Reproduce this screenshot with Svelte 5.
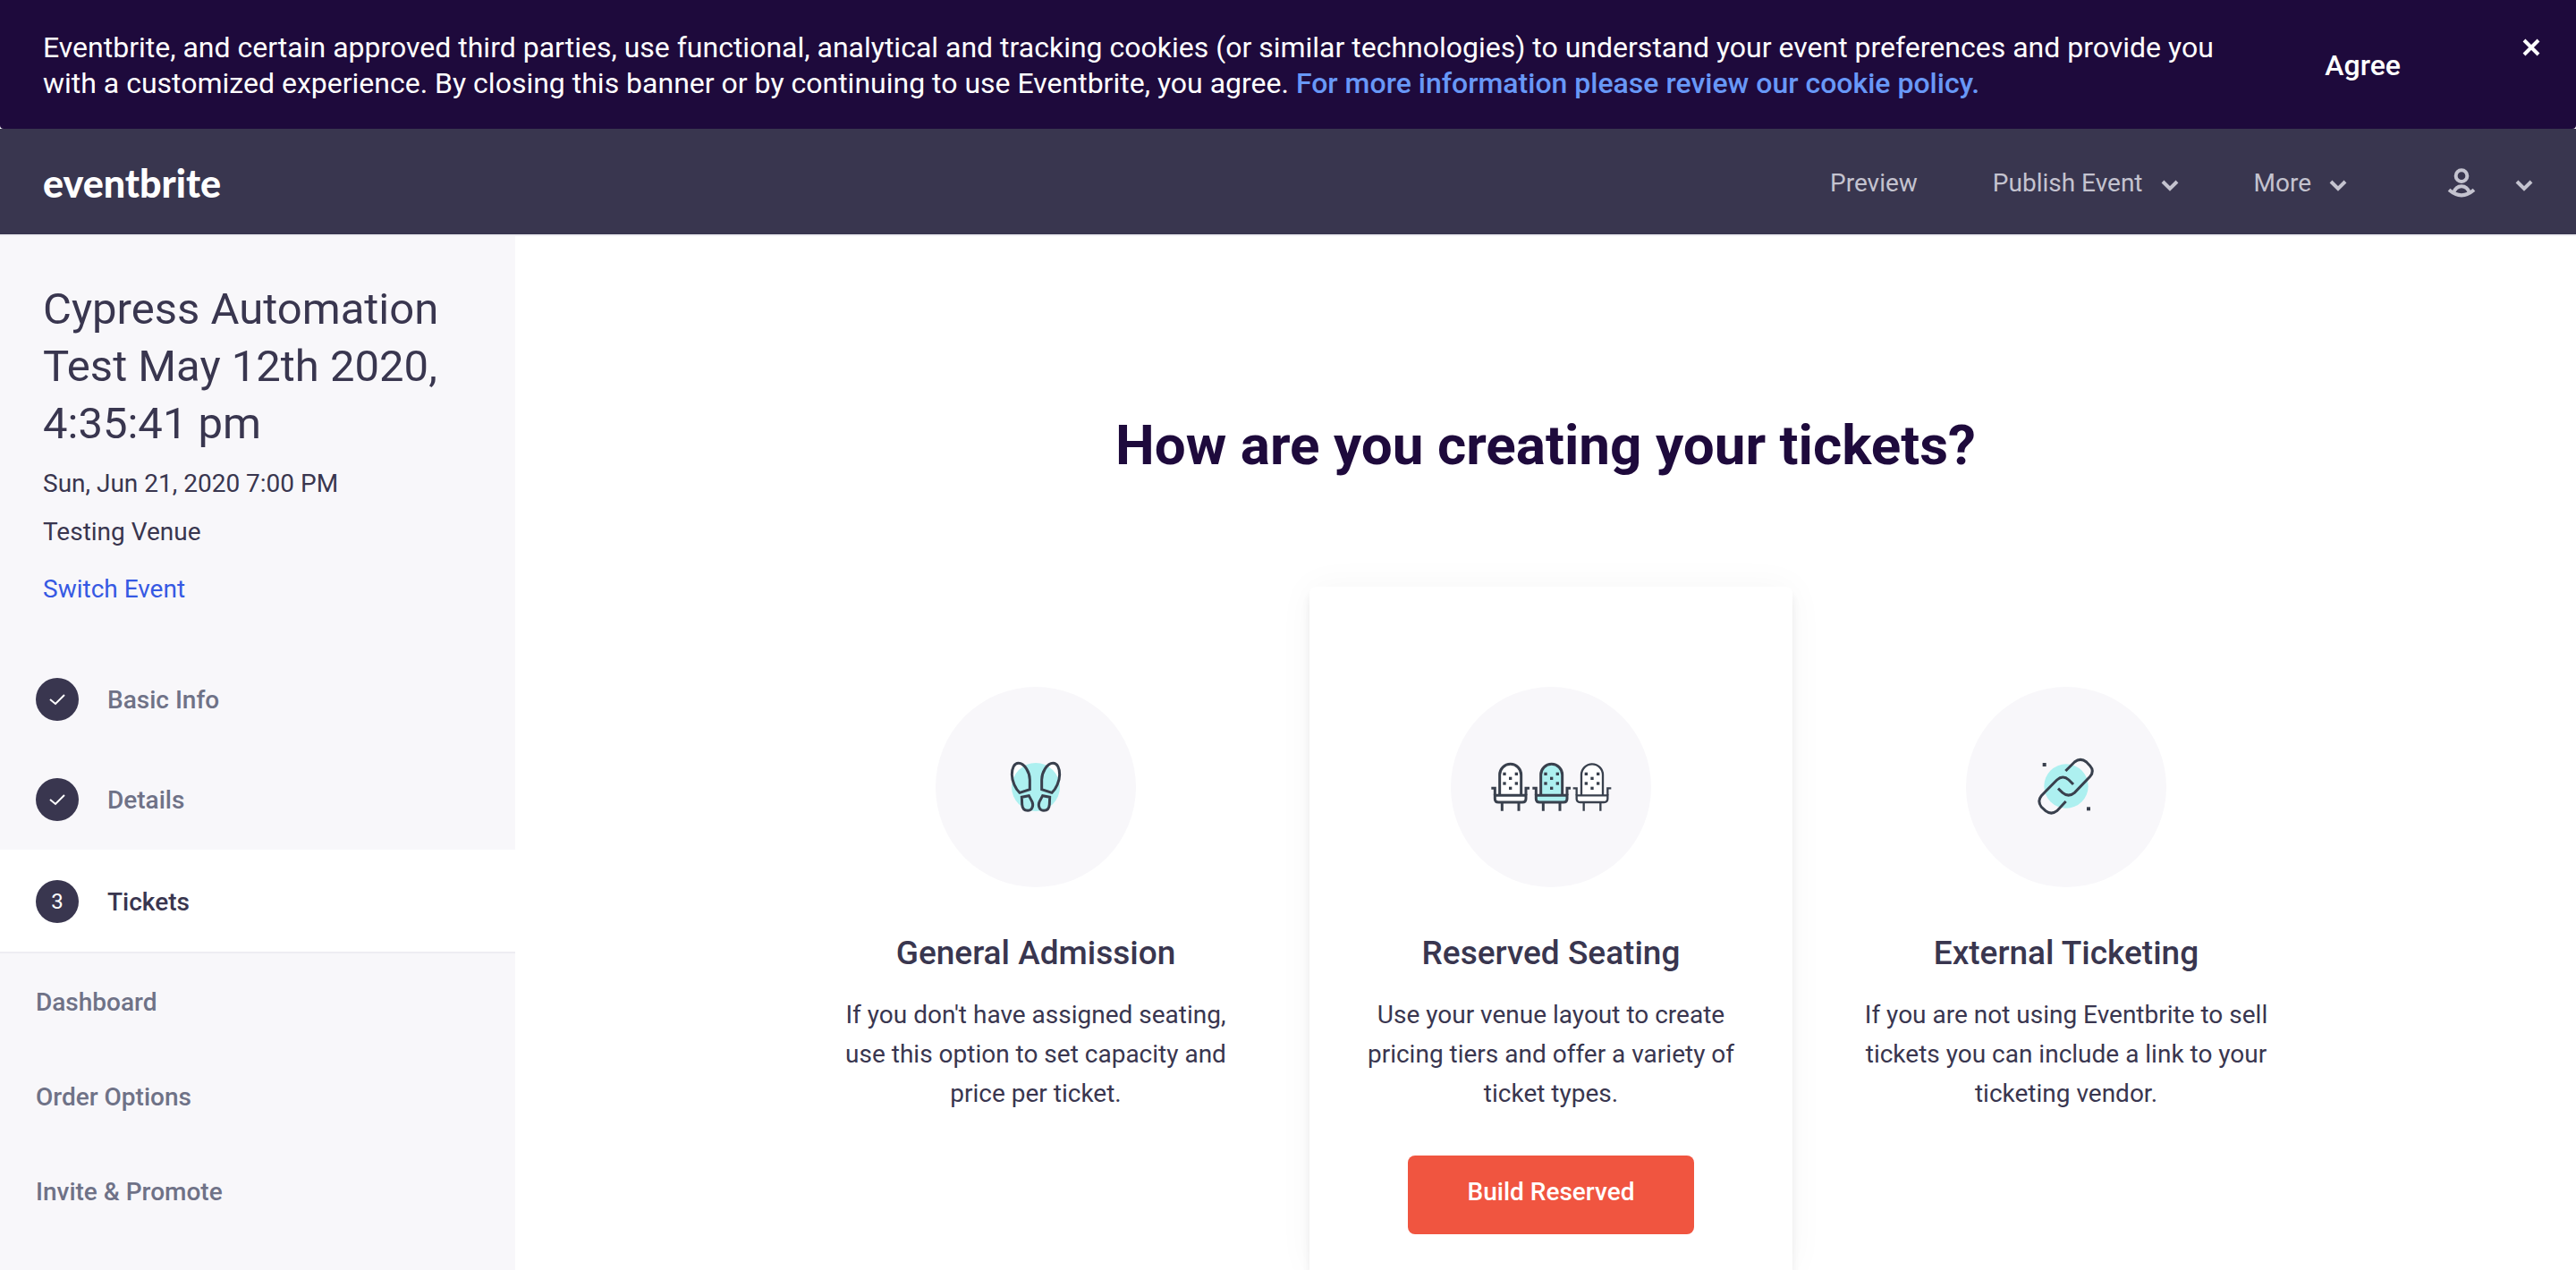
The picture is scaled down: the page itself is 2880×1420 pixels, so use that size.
<script>
  const steps = [
    { label: 'Basic Info', done: true },
    { label: 'Details', done: true },
    { label: 'Tickets', done: false, active: true }
  ];
  const sections = ['Dashboard', 'Order Options', 'Invite & Promote'];
  const options = [
    {
      icon: 'feet',
      title: 'General Admission',
      text: "If you don't have assigned seating, use this option to set capacity and price per ticket."
    },
    {
      icon: 'seats',
      title: 'Reserved Seating',
      text: 'Use your venue layout to create pricing tiers and offer a variety of ticket types.',
      action: 'Build Reserved'
    },
    {
      icon: 'link',
      title: 'External Ticketing',
      text: 'If you are not using Eventbrite to sell tickets you can include a link to your ticketing vendor.'
    }
  ];
  const seats = [
    { x: 236, fill: '#fff', line: 9 },
    { x: 374, fill: '#adf0f0', line: 9 },
    { x: 510, fill: '#fff', line: 7 }
  ];
  const studs = [[-20, 316], [20, 316], [0, 331], [-20, 348], [20, 348], [0, 364]];

  let bannerOpen = $state(true);
  let selected = $state('Reserved Seating');
</script>

{#snippet chevron()}
  <svg class="chevron" viewBox="0 0 20 20" aria-hidden="true"><path d="M2 7l8 8 8-8" /></svg>
{/snippet}

<div class="page">
  {#if bannerOpen}
    <section class="banner" aria-label="Cookies">
      <p>
        Eventbrite, and certain approved third parties, use functional, analytical and tracking cookies (or similar
        technologies) to understand your event preferences and provide you with a customized experience. By closing
        this banner or by continuing to use Eventbrite, you agree.
        <a href="#cookies">For more information please review our cookie policy.</a>
      </p>
      <button class="agree" onclick={() => (bannerOpen = false)}>Agree</button>
      <button class="close" aria-label="Close" onclick={() => (bannerOpen = false)}>
        <svg viewBox="0 0 20 20" aria-hidden="true"><path d="M2 2l16 16M18 2L2 18" /></svg>
      </button>
    </section>
  {/if}

  <header>
    <a class="logo" href="#home">eventbrite</a>
    <nav class="menu" aria-label="Main">
      <a href="#preview">Preview</a>
      <button>Publish Event {@render chevron()}</button>
      <button>More {@render chevron()}</button>
      <button class="account" aria-label="Account">
        <svg class="user" viewBox="108 113 96 99" aria-hidden="true">
          <circle cx="156" cy="139" r="19" />
          <path d="M114 186q42 36 84 0M129 196q8-22 27-22t27 22" />
        </svg>
        {@render chevron()}
      </button>
    </nav>
  </header>

  <div class="body">
    <aside>
      <div class="event">
        <h2>Cypress Automation Test May 12th 2020, 4:35:41 pm</h2>
        <p>Sun, Jun 21, 2020 7:00 PM</p>
        <p>Testing Venue</p>
        <a href="#switch">Switch Event</a>
      </div>
      <nav aria-label="Event">
        {#each steps as step, i}
          <a class="step" class:active={step.active} href="#step-{i + 1}">
            <span class="badge">
              {#if step.done}
                <svg viewBox="0 0 48 48" aria-hidden="true"><path d="M16 24l6 5 10-10" /></svg>
              {:else}
                {i + 1}
              {/if}
            </span>
            {step.label}
          </a>
        {/each}
        {#each sections as section}
          <a class="section" href="#{section}">{section}</a>
        {/each}
      </nav>
    </aside>

    <main>
      <h1>How are you creating your tickets?</h1>
      <div class="options">
        {#each options as option}
          <article class:selected={selected === option.title}>
            {#if option.icon === 'feet'}
              <svg class="picture" viewBox="18 24 672 672" aria-hidden="true">
                <g class="paper">
                  <path d="M300 379L334 368V335C334 312 317 280 296 280C281 280 274 298 274 318C274 340 286 367 300 379Z" />
                  <path d="M408 379L374 368V335C374 312 391 280 412 280C427 280 434 298 434 318C434 340 422 367 408 379Z" />
                </g>
                <circle class="tint" cx="354" cy="360" r="81" />
                <g class="ink">
                  <path d="M300 379L334 368V335C334 312 317 280 296 280C281 280 274 298 274 318C274 340 286 367 300 379Z" />
                  <path d="M307 394L331 389L342 410C348 425 340 439 327 439C315 439 309 431 308 418Z" />
                  <path d="M408 379L374 368V335C374 312 391 280 412 280C427 280 434 298 434 318C434 340 422 367 408 379Z" />
                  <path d="M401 394L377 389L366 410C360 425 368 439 381 439C393 439 399 431 400 418Z" />
                </g>
              </svg>
            {:else if option.icon === 'seats'}
              <svg class="picture" viewBox="36 24 672 672" aria-hidden="true">
                {#each seats as seat}
                  <g class="ink" transform="translate({seat.x} 0)" stroke-width={seat.line}>
                    <path fill={seat.fill} d="M-36 388V319a36 36 0 0 1 72 0V388" />
                    <path fill={seat.fill} d="M-52 388V399q0 12 12 12H40q12 0 12-12V388Z" />
                    <path d="M-64 364H-52V388M64 364H52V388M-28 411V440M28 411V440" />
                    {#each studs as [x, y]}
                      <rect class="dot" x={x - 5} y={y - 5} width="10" height="10" />
                    {/each}
                  </g>
                {/each}
              </svg>
            {:else}
              <svg class="picture" viewBox="24 24 672 672" aria-hidden="true">
                <circle class="tint" cx="360" cy="357" r="74" />
                <g class="ink">
                  <path d="M358 306L388 276Q408 260 428 276L440 289Q456 307 440 325L388 379Q368 396 348 379L333 365" />
                  <path d="M384 351L369 336Q349 318 329 336L277 389Q262 407 277 427L291 440Q310 455 329 440L359 408" />
                </g>
                <rect class="dot" x="281" y="279" width="12" height="12" />
                <rect class="dot" x="429" y="427" width="12" height="12" />
              </svg>
            {/if}
            <h3>{option.title}</h3>
            <p>{option.text}</p>
            {#if option.action}
              <button class="build">{option.action}</button>
            {/if}
          </article>
        {/each}
      </div>
    </main>
  </div>
</div>

<style>
  :global(body) {
    margin: 0;
    font-family: Roboto, 'Liberation Sans', sans-serif;
    font-size: 28px;
    color: #39364f;
    background: #fff;
  }

  .page {
    display: flex;
    flex-direction: column;
    height: 100vh;
    overflow: hidden;
  }

  h1, h2, h3, p {
    margin: 0;
  }

  a {
    color: inherit;
    text-decoration: none;
  }

  button {
    padding: 0;
    border: 0;
    background: none;
    color: inherit;
    font: inherit;
    cursor: pointer;
  }

  svg {
    display: block;
    fill: none;
    stroke: currentColor;
  }

  .banner {
    display: flex;
    align-items: center;
    padding: 33px 40px 31px 48px;
    border-radius: 0 0 4px 4px;
    background: #1e0a3c;
    color: #fff;
    font-size: 32px;
    line-height: 40px;
  }

  .banner p {
    flex: 1;
    margin-right: 112px;
  }

  .banner a {
    color: #6898f7;
    font-weight: 500;
  }

  .agree {
    margin-right: 136px;
    font-weight: 500;
  }

  .close {
    align-self: flex-start;
    padding: 10px 0;
  }

  .close svg {
    width: 20px;
    height: 20px;
    stroke-width: 4;
  }

  header {
    display: flex;
    align-items: center;
    justify-content: space-between;
    box-sizing: border-box;
    height: 120px;
    flex: none;
    padding: 3px 48px 0;
    border-bottom: 2px solid #eeedf2;
    background: #39364f;
  }

  .logo {
    color: #fff;
    font: 900 43px/64px Lato, sans-serif;
  }

  .menu {
    display: flex;
    align-items: center;
    gap: 84px;
    color: #c4c3cf;
  }

  .menu button {
    display: flex;
    align-items: center;
    gap: 20px;
  }

  .menu .account {
    gap: 44px;
    margin-left: 28px;
  }

  .chevron {
    width: 20px;
    height: 20px;
    padding-top: 3px;
    stroke-width: 4;
  }

  .user {
    width: 32px;
    height: 33px;
    stroke-width: 12;
  }

  .body {
    display: flex;
    flex: 1;
    min-height: 0;
  }

  aside {
    flex: none;
    width: 20%;
    background: #f8f7fa;
  }

  .event {
    padding: 50px 48px 45px;
    line-height: 54px;
  }

  .event h2 {
    margin-bottom: 8px;
    font-size: 49px;
    font-weight: 400;
    line-height: 64px;
  }

  .event a {
    display: block;
    margin-top: 15px;
    color: #3659e3;
    line-height: 44px;
  }

  .step,
  .section {
    display: flex;
    align-items: center;
    color: #6f7287;
    font-weight: 500;
  }

  .step {
    gap: 32px;
    height: 112px;
    padding: 0 40px;
  }

  .section {
    box-sizing: border-box;
    height: 106px;
    padding: 2px 40px 0;
  }

  .step.active {
    border-top: 2px solid #fff;
    border-bottom: 2px solid #eeedf2;
    background: #fff;
    color: #39364f;
  }

  .badge {
    display: flex;
    align-items: center;
    justify-content: center;
    width: 48px;
    height: 48px;
    border-radius: 50%;
    background: #39364f;
    color: #fff;
    font-size: 24px;
    font-weight: 400;
  }

  .badge svg {
    width: 48px;
    height: 48px;
    stroke-width: 2;
  }

  main {
    display: flex;
    flex: 1;
    flex-direction: column;
    align-items: center;
    padding-top: 198px;
  }

  h1 {
    margin-bottom: 122px;
    color: #1e0a3c;
    font-size: 62px;
    font-weight: 700;
    line-height: 72px;
  }

  .options {
    display: grid;
    flex: 1;
    grid-template-columns: repeat(3, 1fr);
    gap: 36px;
    box-sizing: border-box;
    width: 75%;
    min-width: 1200px;
    padding: 0 12px 0 24px;
  }

  article {
    display: flex;
    flex-direction: column;
    align-items: center;
    padding: 112px 40px 40px;
    border-radius: 8px 8px 0 0;
    text-align: center;
  }

  .selected {
    box-shadow: 0 8px 8px rgba(40, 44, 53, 0.08), 0 0 40px rgba(40, 44, 53, 0.04);
  }

  .picture {
    width: 224px;
    height: 224px;
    border-radius: 50%;
    background: #f8f7fa;
    stroke: none;
  }

  .ink {
    stroke: #39404d;
  }

  .ink:not([stroke-width]) {
    stroke-width: 9;
  }

  .paper {
    fill: #fff;
  }

  .tint {
    fill: #adf0f0;
  }

  .dot {
    fill: #39404d;
    stroke: none;
  }

  h3 {
    margin: 50px 0 23px;
    font-size: 37px;
    font-weight: 500;
    line-height: 48px;
  }

  article p {
    line-height: 44px;
  }

  .build {
    width: 320px;
    height: 88px;
    margin-top: 47px;
    padding-bottom: 8px;
    border-radius: 8px;
    background: #f05540;
    color: #fff;
    font-weight: 500;
  }
</style>
